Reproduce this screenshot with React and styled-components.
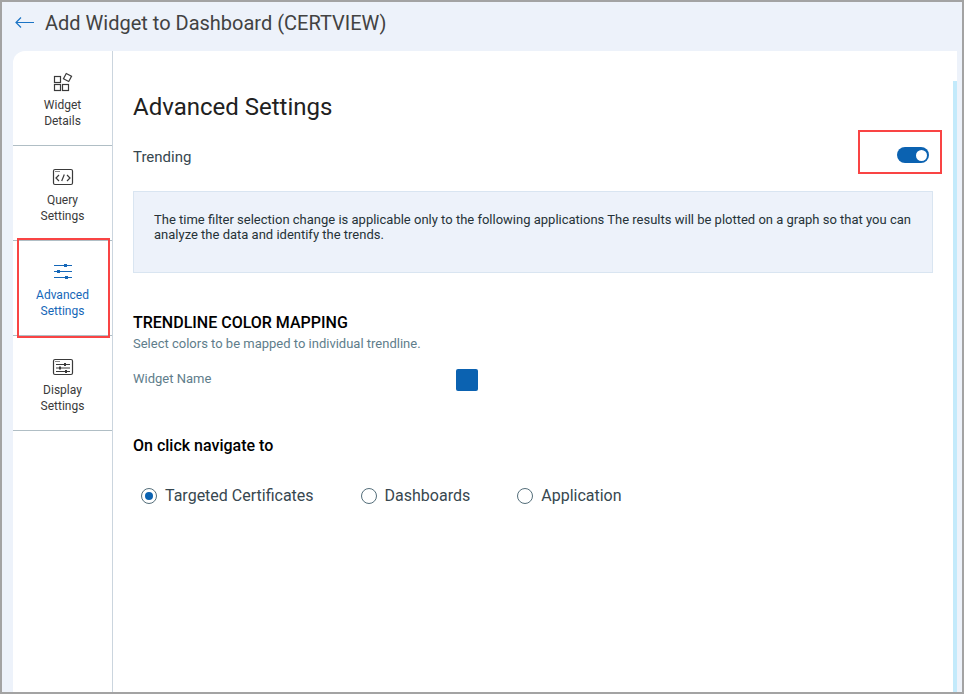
import { useState } from "react";
import styled, { createGlobalStyle } from "styled-components";

const GlobalStyle = createGlobalStyle`
  * {
    box-sizing: border-box;
  }
  body {
    margin: 0;
    font-family: Roboto, "Liberation Sans", sans-serif;
    color: #37474f;
  }
`;

const Page = styled.div`
  display: flex;
  flex-direction: column;
  min-height: 100vh;
  border: 2px solid #a3a3a3;
  background-color: #edf2fa;
`;

const Header = styled.header`
  display: flex;
  align-items: center;
  gap: 10px;
  padding: 7px 13px 14px;
`;

const BackButton = styled.button`
  display: flex;
  padding: 0;
  border: none;
  background: none;
  color: #1b74c5;
  cursor: pointer;
`;

const PageTitle = styled.h1`
  margin: 0;
  font-size: 20px;
  font-weight: 400;
  line-height: 28px;
  color: #424242;
`;

const Panel = styled.div`
  display: flex;
  flex: 1;
  margin: 0 5px 0 11px;
  border-top-left-radius: 12px;
  background-color: #fff;
`;

const Steps = styled.nav`
  display: flex;
  flex-direction: column;
  flex: 0 0 100px;
  border-right: 1px solid #cbd5de;
`;

const Step = styled.button`
  position: relative;
  display: flex;
  flex-direction: column;
  align-items: center;
  gap: 2px;
  height: 95px;
  padding: 20px 12px 0;
  border: none;
  border-bottom: 1px solid #b0bec5;
  background: none;
  font-family: inherit;
  font-size: 12px;
  line-height: 16px;
  color: ${(props) => (props.$active ? "#1567b8" : "#3a3a3a")};
  cursor: pointer;
`;

const StepLabel = styled.span`
  width: 60px;
`;

const Highlight = styled.span`
  position: absolute;
  inset: ${(props) => props.$inset};
  z-index: 1;
  border: 2px solid #f94444;
  pointer-events: none;
`;

const Content = styled.main`
  flex: 1;
  padding: 41px 20px 0;
`;

const Title = styled.h2`
  margin: 0;
  font-size: 24px;
  font-weight: 400;
  line-height: 30px;
  color: #212121;
`;

const SettingRow = styled.div`
  display: flex;
  justify-content: space-between;
  align-items: flex-start;
  margin-top: 25px;
  font-size: 15px;
  line-height: 20px;
`;

const SwitchBox = styled.span`
  position: relative;
  display: flex;
  margin-right: 4px;
`;

const Switch = styled.input`
  appearance: none;
  display: flex;
  align-items: center;
  justify-content: flex-end;
  width: 32px;
  height: 16px;
  margin: 0;
  padding: 0 2px;
  border-radius: 8px;
  background-color: #0b62b1;
  cursor: pointer;

  &::before {
    content: "";
    width: 11px;
    height: 11px;
    border-radius: 50%;
    background-color: #fff;
  }
  &:not(:checked) {
    justify-content: flex-start;
    background-color: #90a4ae;
  }
`;

const Info = styled.p`
  margin: 24px 0 40px;
  padding: 20px 20px 30px;
  border: 1px solid #d9e5f1;
  background-color: #edf2fa;
  font-size: 13px;
  line-height: 15px;
  color: #263238;
`;

const SectionTitle = styled.h3`
  margin: 0;
  font-size: 16px;
  font-weight: 500;
  line-height: 20px;
  color: #000;
`;

const Muted = styled.p`
  margin: 0;
  font-size: 13px;
  line-height: 20px;
  color: #607d8b;
`;

const ColorRow = styled.div`
  display: grid;
  grid-template-columns: 323px auto;
  justify-content: start;
  margin: 15px 0 45px;
`;

const Swatch = styled.button`
  width: 22px;
  height: 22px;
  padding: 0;
  border: none;
  border-radius: 2px;
  background-color: #0b62b1;
  cursor: pointer;
`;

const ColorMapping = styled.section`
  display: flex;
  flex-direction: column;
  gap: 1px;
`;

const Options = styled.div`
  display: flex;
  gap: 47px;
  margin-top: 30px;
  padding-left: 8px;
`;

const Option = styled.label`
  display: flex;
  align-items: center;
  gap: 8px;
  font-size: 16px;
  line-height: 20px;
`;

const Radio = styled.input`
  appearance: none;
  display: grid;
  place-content: center;
  width: 16px;
  height: 16px;
  margin: 0;
  border: 1px solid #546e7a;
  border-radius: 50%;

  &:checked::before {
    content: "";
    width: 8px;
    height: 8px;
    border-radius: 50%;
    background-color: #0b62b1;
  }
`;

const ScrollBar = styled.div`
  flex: 0 0 4px;
  margin-top: 30px;
  background-color: #c3eafb;
`;

const BackIcon = () => (
  <svg width="20" height="14" viewBox="0 0 20 14" fill="none" stroke="currentColor" strokeWidth="1.2">
    <path d="M19 6.5H1.5M6 1.5l-5 5 5 5" />
  </svg>
);

const WidgetIcon = () => (
  <svg width="22" height="24" viewBox="0 0 22 24" fill="none" stroke="currentColor" strokeWidth="1.2">
    <rect x="2.5" y="5.5" width="6" height="6" />
    <rect x="2.5" y="13.5" width="6" height="6" />
    <rect x="10.5" y="13.5" width="6" height="6" />
    <rect x="12.5" y="3.5" width="6" height="6" transform="rotate(28 15.5 6.5)" />
  </svg>
);

const QueryIcon = () => (
  <svg width="22" height="24" viewBox="0 0 22 24" fill="none" stroke="currentColor" strokeWidth="1.2">
    <rect x="1.5" y="3.5" width="19" height="15" rx="1.5" />
    <path d="M3 5.5h5" strokeWidth="1" opacity="0.6" />
    <path d="M7 9l-3 3 3 3M15 9l3 3-3 3M12.3 8.5l-2.6 6.5" />
  </svg>
);

const SlidersIcon = () => (
  <svg width="22" height="24" viewBox="0 0 22 24" fill="none" stroke="currentColor">
    <path d="M2 4.5h18M2 10.5h18M2 16.5h18" />
    <g fill="currentColor" stroke="none">
      <rect x="12" y="3" width="3" height="3" />
      <rect x="5" y="9" width="3" height="3" />
      <rect x="13" y="15" width="3" height="3" />
    </g>
  </svg>
);

const DisplayIcon = () => (
  <svg width="22" height="24" viewBox="0 0 22 24" fill="none" stroke="currentColor">
    <rect x="1.5" y="3.5" width="19" height="15" rx="1.5" strokeWidth="1.2" />
    <path d="M3 5.5h5" opacity="0.6" />
    <path d="M4 8.5h14M4 12h14M4 15.5h14" />
    <g fill="currentColor" stroke="none">
      <rect x="12" y="7" width="2" height="3" />
      <rect x="7" y="10.5" width="2" height="3" />
      <rect x="13" y="14" width="2" height="3" />
    </g>
  </svg>
);

const steps = [
  { label: "Widget Details", icon: <WidgetIcon /> },
  { label: "Query Settings", icon: <QueryIcon /> },
  { label: "Advanced Settings", icon: <SlidersIcon />, active: true },
  { label: "Display Settings", icon: <DisplayIcon /> },
];

const targets = ["Targeted Certificates", "Dashboards", "Application"];

const App = () => {
  const [trending, setTrending] = useState(true);
  const [target, setTarget] = useState(targets[0]);

  return (
    <>
      <GlobalStyle />
      <Page>
        <Header>
          <BackButton aria-label="Back">
            <BackIcon />
          </BackButton>
          <PageTitle>Add Widget to Dashboard (CERTVIEW)</PageTitle>
        </Header>
        <Panel>
          <Steps>
            {steps.map((step) => (
              <Step key={step.label} $active={step.active}>
                {step.icon}
                <StepLabel>{step.label}</StepLabel>
                {step.active && <Highlight $inset="-3px 2px -3px 4px" />}
              </Step>
            ))}
          </Steps>
          <Content>
            <Title>Advanced Settings</Title>
            <SettingRow>
              <label htmlFor="trending">Trending</label>
              <SwitchBox>
                <Switch
                  type="checkbox"
                  role="switch"
                  id="trending"
                  checked={trending}
                  onChange={(e) => setTrending(e.target.checked)}
                />
                <Highlight $inset="-17px -13px -11px -39px" />
              </SwitchBox>
            </SettingRow>
            <Info>
              The time filter selection change is applicable only to the following applications The
              results will be plotted on a graph so that you can analyze the data and identify the
              trends.
            </Info>
            <ColorMapping>
              <SectionTitle>TRENDLINE COLOR MAPPING</SectionTitle>
              <Muted>Select colors to be mapped to individual trendline.</Muted>
            </ColorMapping>
            <ColorRow>
              <Muted>Widget Name</Muted>
              <Swatch aria-label="Widget Name color" />
            </ColorRow>
            <SectionTitle id="navigate">On click navigate to</SectionTitle>
            <Options role="radiogroup" aria-labelledby="navigate">
              {targets.map((name) => (
                <Option key={name}>
                  <Radio
                    type="radio"
                    name="target"
                    checked={target === name}
                    onChange={() => setTarget(name)}
                  />
                  {name}
                </Option>
              ))}
            </Options>
          </Content>
          <ScrollBar />
        </Panel>
      </Page>
    </>
  );
};

export default App;
